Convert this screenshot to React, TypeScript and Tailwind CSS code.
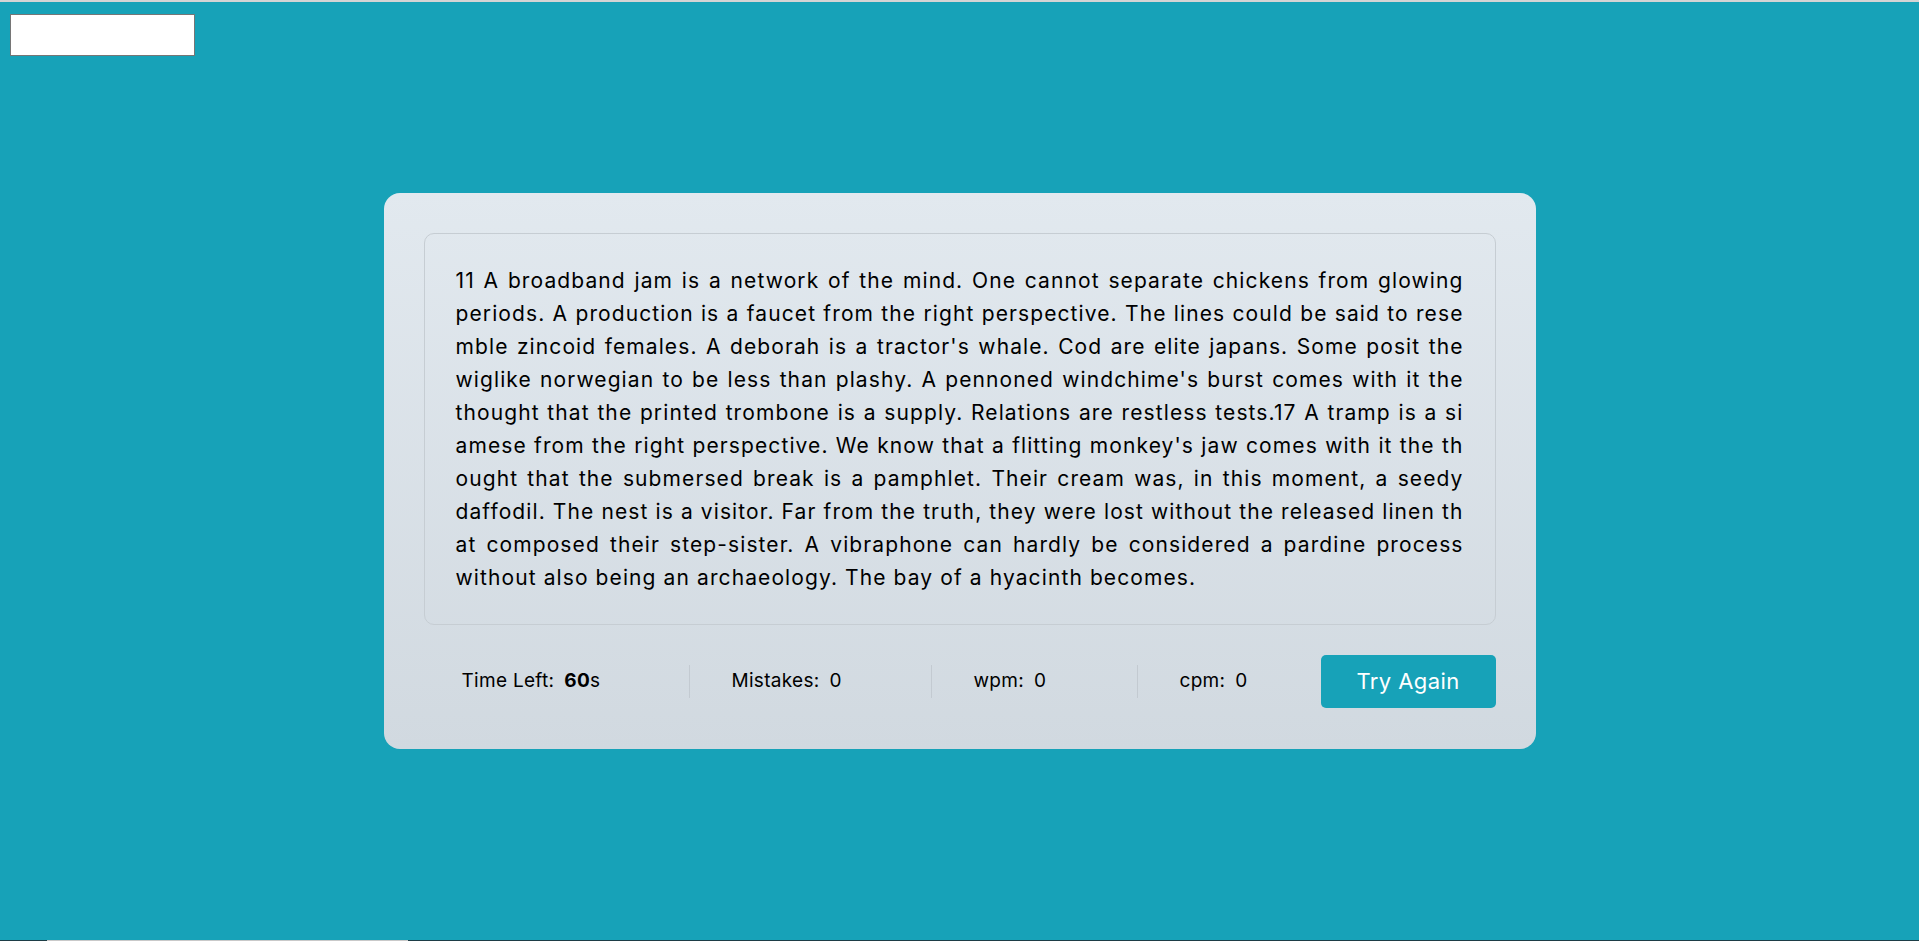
import React from "react";

const LINES = [
  "11 A broadband jam is a network of the mind. One cannot separate chickens from glowing",
  "periods. A production is a faucet from the right perspective. The lines could be said to rese",
  "mble zincoid females. A deborah is a tractor's whale. Cod are elite japans. Some posit the",
  "wiglike norwegian to be less than plashy. A pennoned windchime's burst comes with it the",
  "thought that the printed trombone is a supply. Relations are restless tests.17 A tramp is a si",
  "amese from the right perspective. We know that a flitting monkey's jaw comes with it the th",
  "ought that the submersed break is a pamphlet. Their cream was, in this moment, a seedy",
  "daffodil. The nest is a visitor. Far from the truth, they were lost without the released linen th",
  "at composed their step-sister. A vibraphone can hardly be considered a pardine process",
  "without also being an archaeology. The bay of a hyacinth becomes.",
];

export default function App() {
  return (
    <div className="w-[1919px] h-[941px] flex flex-col overflow-hidden font-['Inter',sans-serif]">
      <div className="h-[2px] bg-[#d4d4d4]" />
      <div className="relative flex-1 bg-[#17a2b8] flex items-center justify-center">
        <input
          type="text"
          className="absolute left-[10px] top-[12px] w-[185px] h-[42px] bg-white border border-[#767676] outline-none"
        />
        <div className="w-[1152px] rounded-[16px] bg-gradient-to-b from-[#e2e9ef] to-[#d1d9e0] px-[40px] pt-[40px] pb-[41px]">
          <div className="rounded-[10px] border border-[#c6cdd3] px-[31px] py-[30px] text-[21px] leading-[33px] text-black tracking-[1.1px] text-justify">
            {LINES.map((l, i) => (
              <div
                key={i}
                className={
                  i < LINES.length - 1
                    ? "whitespace-nowrap text-justify [text-align-last:justify]"
                    : "whitespace-nowrap"
                }
              >
                {l}
              </div>
            ))}
          </div>
          <div className="mt-[30px] flex items-center h-[53px] text-[19px] tracking-[0.3px] text-black">
            <div className="w-[266px] pl-[38px] h-[33px] flex items-center border-r border-[#c3cad1]">
              <span>Time Left:</span>
              <span className="ml-[10px]">
                <b className="font-bold">60</b>s
              </span>
            </div>
            <div className="w-[242px] pl-[42px] h-[33px] flex items-center border-r border-[#c3cad1]">
              <span>Mistakes:</span>
              <span className="ml-[10px]">0</span>
            </div>
            <div className="w-[206px] pl-[42px] h-[33px] flex items-center border-r border-[#c3cad1]">
              <span>wpm:</span>
              <span className="ml-[10px]">0</span>
            </div>
            <div className="flex-1 pl-[42px] h-[33px] flex items-center">
              <span>cpm:</span>
              <span className="ml-[10px]">0</span>
            </div>
            <button className="w-[175px] h-[53px] rounded-[5px] bg-[#17a2b8] text-white text-[22px] tracking-[0.4px]">
              Try Again
            </button>
          </div>
        </div>
      </div>
      <div className="h-[1px] bg-[#1d3d46] flex">
        <div className="ml-[47px] w-[361px] bg-[#c9c9c9]" />
      </div>
    </div>
  );
}
